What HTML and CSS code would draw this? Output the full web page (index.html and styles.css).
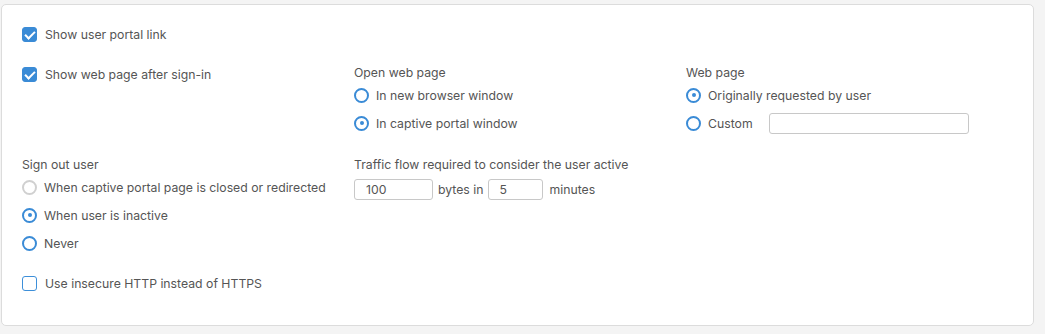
FILE: index.html
```html
<!DOCTYPE html>
<html lang="en">
<head>
  <meta charset="UTF-8">
  <title>Captive portal settings</title>
  <link rel="stylesheet" href="styles.css">
</head>
<body>

<div class="card">
  <label class="check-row first">
    <span class="checkbox checked"></span>
    <span>Show user portal link</span>
  </label>

  <div class="grid">
    <label class="check-row">
      <span class="checkbox checked"></span>
      <span>Show web page after sign-in</span>
    </label>

    <div class="group">
      <div class="group-label">Open web page</div>
      <label class="radio-row"><span class="radio"></span>In new browser window</label>
      <label class="radio-row"><span class="radio on"></span>In captive portal window</label>
    </div>

    <div class="group">
      <div class="group-label">Web page</div>
      <label class="radio-row"><span class="radio on"></span>Originally requested by user</label>
      <label class="radio-row"><span class="radio"></span>Custom<input class="text-input custom" type="text"></label>
    </div>

    <div class="group">
      <div class="group-label">Sign out user</div>
      <label class="radio-row"><span class="radio off"></span>When captive portal page is closed or redirected</label>
      <label class="radio-row"><span class="radio on"></span>When user is inactive</label>
      <label class="radio-row"><span class="radio"></span>Never</label>
    </div>

    <div class="group">
      <div class="group-label">Traffic flow required to consider the user active</div>
      <div class="traffic">
        <input class="text-input bytes" type="text" value="100">
        <span>bytes in</span>
        <input class="text-input minutes" type="text" value="5">
        <span>minutes</span>
      </div>
    </div>
  </div>

  <label class="check-row last">
    <span class="checkbox"></span>
    <span>Use insecure HTTP instead of HTTPS</span>
  </label>
</div>

</body>
</html>
```

FILE: styles.css
```css
body {
  margin: 0;
  padding: 4px 11px 0 1px;
  background-color: #f4f4f4;
  font-family: Inter, "Noto Sans", sans-serif;
  font-size: 12.25px;
  color: #555;
}
.card {
  background-color: #fff;
  border: 1px solid #dcdcdc;
  border-radius: 5px;
  height: 322px;
  box-sizing: border-box;
  padding: 20px 20px 0 20px;
}
.check-row {
  display: flex;
  align-items: center;
  gap: 8px;
  height: 18px;
}
.first {
  margin-bottom: 22px;
}
.last {
  margin-top: 11px;
}
.checkbox {
  width: 15px;
  height: 15px;
  border: 1.5px solid #3d8fd9;
  border-radius: 3px;
  box-sizing: border-box;
  position: relative;
  flex: none;
}
.checkbox.checked {
  background-color: #3a8bd6;
  border-color: #3a8bd6;
}
.checkbox.checked::after {
  content: "";
  position: absolute;
  left: 4px;
  top: 1px;
  width: 4px;
  height: 8px;
  border: solid #fff;
  border-width: 0 2.5px 2.5px 0;
  transform: rotate(45deg);
}
.grid {
  display: grid;
  grid-template-columns: 332px 332px 1fr;
  row-gap: 14px;
}
.group-label {
  height: 16px;
  line-height: 16px;
  margin-bottom: 6px;
}
.radio-row {
  display: flex;
  align-items: center;
  gap: 7px;
  height: 16px;
  margin-bottom: 12px;
}
.radio {
  width: 15px;
  height: 15px;
  border: 2px solid #3a8bd6;
  border-radius: 50%;
  box-sizing: border-box;
  position: relative;
  flex: none;
}
.radio.on::after {
  content: "";
  position: absolute;
  left: 3.5px;
  top: 3.5px;
  width: 4px;
  height: 4px;
  border-radius: 50%;
  background-color: #3a8bd6;
}
.radio.off {
  border-color: #d0d0d0;
}
.text-input {
  height: 21px;
  border: 1px solid #c8c8c8;
  border-radius: 3px;
  box-sizing: border-box;
  font: inherit;
  color: #555;
  padding: 0 10px;
}
.custom {
  width: 200px;
  margin-left: 9px;
}
.traffic {
  display: flex;
  align-items: center;
  gap: 5px;
}
.bytes {
  width: 79px;
  padding-left: 11px;
}
.minutes {
  width: 55px;
  margin-right: 1px;
}
```
